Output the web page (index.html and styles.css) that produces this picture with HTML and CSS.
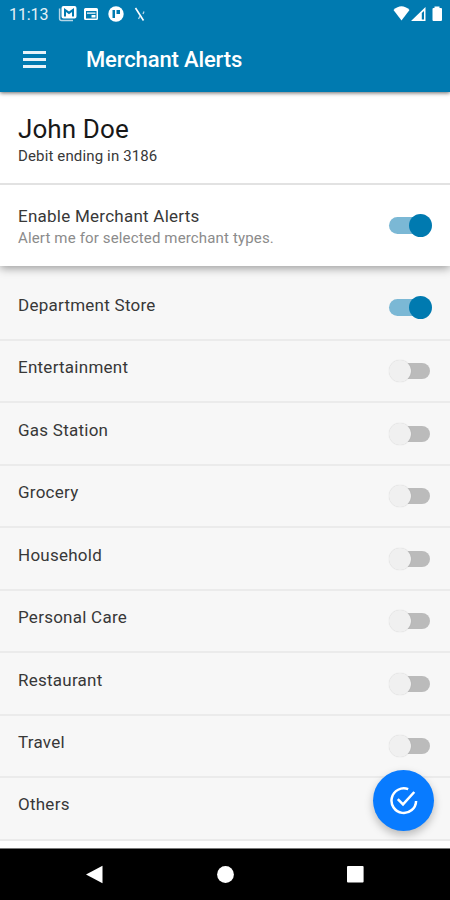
FILE: index.html
```html
<!DOCTYPE html>
<html lang="en">
<head>
<meta charset="utf-8">
<title>Merchant Alerts</title>
<link rel="stylesheet" href="styles.css">
</head>
<body>
<div class="screen">
  <header class="top">
    <div class="status">
      <span class="time">11:13</span>
      <svg class="status-left" width="90" height="20" viewBox="0 0 90 20" fill="#fff">
        <path d="M1.600 4.500V14.600Q1.600 16.600 3.600 16.600H15" fill="none" stroke="#b5d6e7" stroke-width="1.500"/>
        <path fill-rule="evenodd" d="M5.500 2H16.500Q18.500 2 18.500 4V12.500Q18.500 14.500 16.500 14.500H5.500Q3.500 14.500 3.500 12.500V4Q3.500 2 5.500 2ZM6 4V12.500H8V8L11 10.300L14 8V12.500H16V4L11 7.500Z"/>
        <path fill-rule="evenodd" d="M27.500 4H38.500Q40 4 40 5.500V14.500Q40 16 38.500 16H27.500Q26 16 26 14.500V5.500Q26 4 27.500 4ZM28 7V14.500H38.500V7ZM29 8.500H37.500V9.800H29ZM33.500 11H37.500V13.500H33.500Z"/>
        <circle cx="58" cy="10" r="7.700"/>
        <path d="M54.500 6H57V14H54.500ZM58.500 6H62V10H58.500Z" fill="#007ab0"/>
        <path d="M77.500 4L85.500 16.500" fill="none" stroke="#fff" stroke-width="1.600"/>
        <path d="M86 7.500L85 10M82 12L80.500 15" fill="none" stroke="#b5d6e7" stroke-width="1.300"/>
      </svg>
      <svg class="status-right" width="50" height="20" viewBox="0 0 50 20" fill="#fff">
        <path d="M.5 6Q8.500 -1.500 16.500 6L8.500 16.500Z"/>
        <path fill-rule="evenodd" d="M18 17L32.500 3V17ZM28.800 9V15.500H31V7Z"/>
        <path d="M41.500 2.500H46.500V4H48Q49 4 49 5V16Q49 17 48 17H40.500Q39.500 17 39.500 16V5Q39.500 4 40.500 4H41.500Z"/>
      </svg>
    </div>
    <div class="appbar">
      <div class="menu"><i></i><i></i><i></i></div>
      <h1>Merchant Alerts</h1>
    </div>
  </header>
  <section class="profile">
    <h2>John Doe</h2>
    <p>Debit ending in 3186</p>
  </section>
  <section class="enable">
    <div>
      <p class="label">Enable Merchant Alerts</p>
      <p class="hint">Alert me for selected merchant types.</p>
    </div>
    <span class="switch on"></span>
  </section>
  <ul class="list">
    <li class="first"><span class="label">Department Store</span><span class="switch on"></span></li>
    <li><span class="label">Entertainment</span><span class="switch"></span></li>
    <li><span class="label">Gas Station</span><span class="switch"></span></li>
    <li><span class="label">Grocery</span><span class="switch"></span></li>
    <li><span class="label">Household</span><span class="switch"></span></li>
    <li><span class="label">Personal Care</span><span class="switch"></span></li>
    <li><span class="label">Restaurant</span><span class="switch"></span></li>
    <li><span class="label">Travel</span><span class="switch"></span></li>
    <li><span class="label">Others</span></li>
  </ul>
  <div class="fab">
    <svg width="30" height="30" viewBox="0 0 30 30" fill="none" stroke="#fff" stroke-width="2.500">
      <path d="M19.200 3.200A12.300 12.300 0 1 0 27.100 15"/>
      <path d="M8.800 13.200L14 18.400L25.300 6"/>
    </svg>
  </div>
  <nav class="navbar">
    <svg width="18" height="20" viewBox="0 0 18 20" fill="#fff"><path d="M1 9.500L17.500 .7V18.300Z"/></svg>
    <svg width="18" height="20" viewBox="0 0 18 20" fill="#fff"><circle cx="9.500" cy="9.500" r="8.400"/></svg>
    <svg width="18" height="20" viewBox="0 0 18 20" fill="#fff"><rect x="1" y="1" width="16.600" height="16.600" rx="1"/></svg>
  </nav>
</div>
</body>
</html>
```
FILE: styles.css
```css
* { box-sizing: border-box; margin: 0; padding: 0; }
body { font-family: Roboto, sans-serif; color: #383838; background: #fff; }
.screen {
  position: relative;
  width: 450px;
  height: 900px;
  overflow: hidden;
  display: flex;
  flex-direction: column;
}
.top {
  position: relative;
  z-index: 3;
  height: 92px;
  flex: none;
  background: #007ab0;
  color: #fff;
  box-shadow: 0 1px 4px rgba(0, 0, 0, .6);
}
.status { display: flex; height: 28px; padding: 4px 7px 0 9px; }
.time { font-size: 16px; line-height: 21px; width: 49px; letter-spacing: -.1px; color: #e4f1f7; }
.status-right { margin-left: auto; }
.appbar { display: flex; align-items: center; height: 63px; padding-left: 23px; }
.menu { display: flex; flex-direction: column; gap: 4px; width: 23px; margin-right: 40px; }
.menu i { height: 3px; background: #e8f3f9; }
h1 { font-size: 22px; font-weight: 500; line-height: 28px; letter-spacing: -.13px; }
.profile {
  position: relative;
  z-index: 2;
  background: #fff;
  height: 93px;
  flex: none;
  padding: 21px 18px 0;
  border-bottom: 2px solid #e2e2e2;
}
h2 { font-size: 26px; font-weight: 400; line-height: 32px; color: #181818; letter-spacing: .1px; }
.profile p { font-size: 15px; line-height: 20px; margin-top: 1px; letter-spacing: .14px; }
.enable {
  position: relative;
  z-index: 1;
  display: flex;
  justify-content: space-between;
  height: 81px;
  flex: none;
  padding: 20px 18px 0;
  background: #fff;
  box-shadow: 0 2px 9px rgba(0, 0, 0, .4);
}
.enable .switch { margin-top: 9px; }
.label { font-size: 17px; line-height: 22px; letter-spacing: .25px; white-space: nowrap; }
.hint { font-size: 15px; line-height: 21px; margin-top: 1px; letter-spacing: .15px; color: #8b8b8b; white-space: nowrap; }
.switch {
  position: relative;
  flex: none;
  width: 42px;
  height: 23px;
}
.switch::before {
  content: "";
  position: absolute;
  left: 2px;
  top: 4px;
  width: 38px;
  height: 16px;
  border-radius: 8px;
  background: #bbb;
}
.switch::after {
  content: "";
  position: absolute;
  left: -1px;
  top: 1px;
  width: 22px;
  height: 22px;
  border-radius: 50%;
  background: #f0f0f0;
  box-shadow: 0 0 1px rgba(0, 0, 0, .2);
}
.switch.on::before { left: -1px; top: 3px; width: 40px; height: 17px; background: #7bb8d5; border-radius: 9px; }
.switch.on::after { left: 19px; top: 0; width: 23px; height: 23px; background: #007ab0; box-shadow: none; }
.list { list-style: none; background: #f7f7f7; flex: none; }
.list li {
  display: flex;
  justify-content: space-between;
  height: 62.45px;
  padding: 15.4px 18px 0;
  border-bottom: 2px solid #ebebeb;
}
.list li .switch { margin-top: 3px; }
.list li.first { height: 75px; padding-top: 28px; }
.list li.first .switch { margin-top: 2px; }
.fab {
  position: absolute;
  z-index: 3;
  left: 373px;
  top: 770px;
  width: 61px;
  height: 61px;
  border-radius: 50%;
  background: #087bff;
  display: flex;
  align-items: center;
  justify-content: center;
  box-shadow: 0 4px 8px rgba(0, 0, 0, .25);
}
.navbar {
  height: 52px;
  margin-top: auto;
  flex: none;
  background: #000;
  border-top: 1px solid #777;
  display: flex;
  justify-content: space-between;
  align-items: center;
  padding: 0 86px 0 85px;
}
```
